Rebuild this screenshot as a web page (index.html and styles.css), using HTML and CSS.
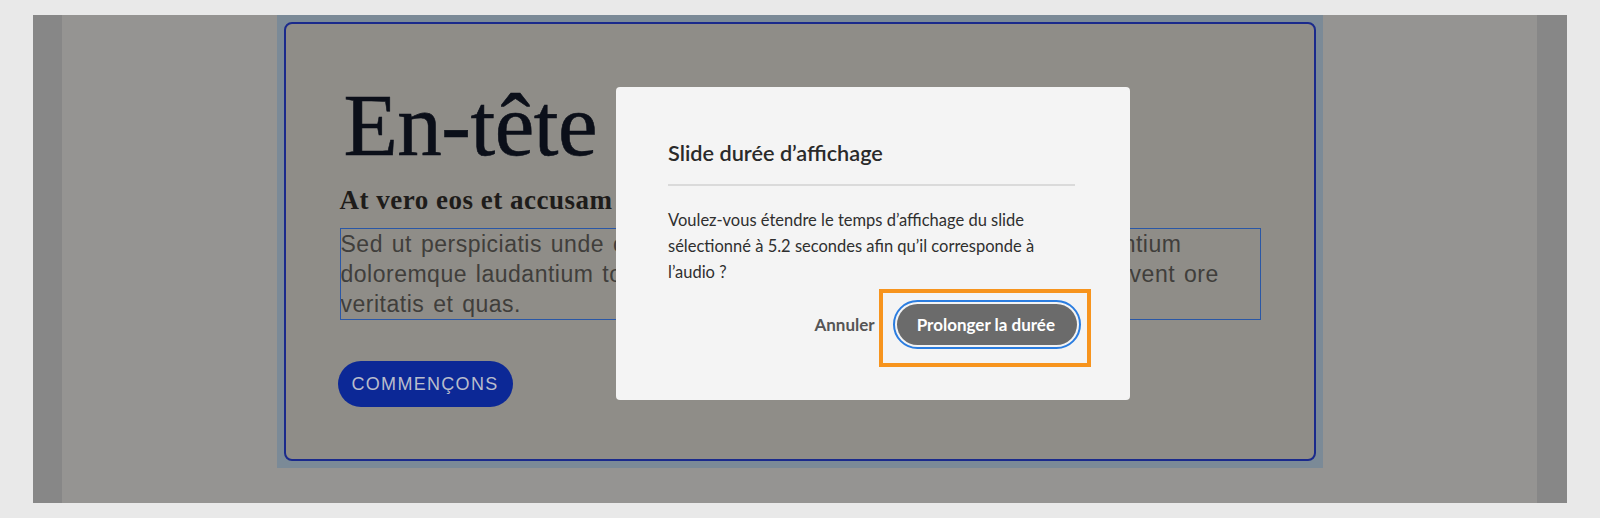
FILE: index.html
```html
<!DOCTYPE html>
<html lang="fr">
<head>
<meta charset="utf-8">
<title>Slide durée d'affichage</title>
<link rel="stylesheet" href="styles.css">
</head>
<body>
<div class="frame">
  <div class="strip"></div>
  <div class="stage">
    <div class="slide">
      <div class="card">
        <h1 class="headline">En-tête</h1>
        <h2 class="subhead">At vero eos et accusam</h2>
        <p class="textbox">Sed ut perspiciatis unde omnis iste natus errore, sit, voluptatem accusantium<br>doloremque laudantium totam rem aperiam eaque ipsa quae ab illo et invent ore<br>veritatis et quas.</p>
        <button class="cta">COMMENÇONS</button>
      </div>
    </div>
  </div>
  <div class="strip"></div>
</div>

<div class="dialog" role="dialog" aria-labelledby="dlg-title">
  <h3 class="dialog-title" id="dlg-title">Slide durée d’affichage</h3>
  <hr class="dialog-divider">
  <p class="dialog-body">Voulez-vous étendre le temps d’affichage du slide<br>sélectionné à 5.2 secondes afin qu’il corresponde à<br>l’audio ?</p>
  <div class="dialog-actions">
    <button class="btn-quiet">Annuler</button>
    <button class="btn-primary">Prolonger la durée</button>
  </div>
</div>
<div class="highlight"></div>
</body>
</html>
```

FILE: styles.css
```css
html, body {
  margin: 0;
  padding: 0;
}
body {
  background: #e9e9e9;
  width: 1600px;
  height: 518px;
  overflow: hidden;
  position: relative;
}
.frame {
  margin: 15px 33px 0;
  height: 488px;
  display: flex;
}
.strip {
  width: 29px;
  background: #878787;
}
.strip:last-child {
  width: 30px;
}
.stage {
  flex: 1;
  background: #959492;
  display: flex;
  justify-content: center;
  align-items: flex-start;
}
.slide {
  width: 1046px;
  height: 453px;
  box-sizing: border-box;
  padding: 7px;
  background: #7b8a97;
}
.card {
  height: 100%;
  box-sizing: border-box;
  border: 2px solid #1a2a8c;
  border-radius: 8px;
  background: #8f8d88;
  padding: 57px 0 0 54px;
}
.headline {
  margin: 0;
  font-family: "Liberation Serif", serif;
  font-weight: normal;
  font-size: 89px;
  line-height: 88px;
  color: #0b0f19;
  padding-left: 4px;
  letter-spacing: -0.5px;
  -webkit-text-stroke: 0.6px #0b0f19;
}
.subhead {
  margin: 18px 0 0;
  font-family: "Liberation Serif", serif;
  font-weight: bold;
  font-size: 27px;
  line-height: 26px;
  color: #1e1c1a;
  letter-spacing: 0.5px;
}
.textbox {
  margin: 15px 0 0;
  width: 921px;
  box-sizing: border-box;
  border: 1px solid #2a57a6;
  font-family: "Liberation Sans", Arial, sans-serif;
  font-size: 23px;
  line-height: 30px;
  letter-spacing: 0.5px;
  word-spacing: 2px;
  color: #403e3b;
  white-space: nowrap;
  overflow: hidden;
}
.cta {
  margin: 41px 0 0 -2px;
  width: 175px;
  height: 46px;
  border: none;
  border-radius: 23px;
  background: #0c2896;
  color: #b9bdcc;
  font-family: "Liberation Sans", Arial, sans-serif;
  font-size: 18px;
  letter-spacing: 1.3px;
  padding: 0;
  display: block;
}

/* dialog overlay */
.dialog {
  position: absolute;
  left: 616px;
  top: 87px;
  width: 514px;
  height: 313px;
  box-sizing: border-box;
  background: #f4f4f4;
  border-radius: 4px;
  padding: 54px 55px 0 52px;
  font-family: Lato, "Open Sans", sans-serif;
}
.dialog-title {
  margin: 0;
  font-size: 21.7px;
  line-height: 25px;
  font-weight: 600;
  color: #2a2a2a;
}
.dialog-divider {
  margin: 18px 0 0;
  border: none;
  height: 2px;
  background: #dadada;
}
.dialog-body {
  margin: 21px 0 0;
  font-size: 16.5px;
  line-height: 26px;
  color: #2f2f2f;
}
.dialog-actions {
  margin-top: 19px;
  display: flex;
  justify-content: flex-end;
  align-items: center;
  gap: 20px;
}
.btn-quiet {
  border: none;
  background: none;
  padding: 0;
  margin-right: 2px;
  font-family: inherit;
  font-size: 17px;
  font-weight: bold;
  color: #555555;
}
.btn-primary {
  height: 41px;
  border: none;
  border-radius: 21px;
  background: #6b6b6b;
  color: #ffffff;
  font-family: inherit;
  font-size: 17px;
  font-weight: bold;
  padding: 0 22px 0 20px;
  outline: 2px solid #2b7de0;
  outline-offset: 2px;
  margin-right: -2px;
}
.highlight {
  position: absolute;
  left: 879px;
  top: 289px;
  width: 212px;
  height: 78px;
  box-sizing: border-box;
  border: 4px solid #f7941d;
}
```
